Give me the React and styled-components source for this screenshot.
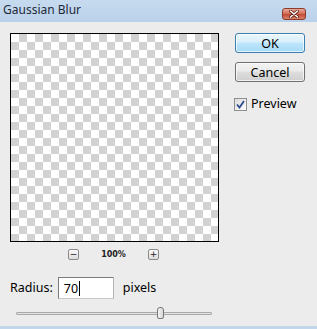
import React from "react";
import styled, { createGlobalStyle } from "styled-components";

const Global = createGlobalStyle`
  html, body { margin: 0; padding: 0; background: #ededed; }
  * { box-sizing: border-box; }
`;

const Window = styled.div`
  width: 317px;
  height: 329px;
  display: flex;
  flex-direction: column;
  background: #ececec;
  border-bottom: 3px solid #c3d7ec;
  font-family: "Noto Sans", "Open Sans", sans-serif;
  color: #000;
  overflow: hidden;
`;

const TitleBar = styled.div`
  height: 22px;
  flex: none;
  display: flex;
  align-items: flex-start;
  justify-content: space-between;
  padding: 0 11px 0 3px;
  background: linear-gradient(#c7dbef, #b9d1ea);
`;

const Title = styled.span`
  font-size: 12px;
  line-height: 20px;
  color: #1e2a38;
`;

const CloseButton = styled.div`
  margin-top: 8px;
  width: 24px;
  height: 12px;
  border: 1px solid #8c3a2c;
  border-radius: 3px;
  background: linear-gradient(#e9a99a, #d36a55 50%, #c04a35 51%, #d8826c);
  display: flex;
  align-items: center;
  justify-content: center;
`;

const Body = styled.div`
  flex: 1;
  display: flex;
  padding: 11px 0 0 10px;
`;

const LeftColumn = styled.div`
  width: 209px;
  display: flex;
  flex-direction: column;
`;

const Canvas = styled.div`
  width: 209px;
  height: 209px;
  border: 1px solid #000;
  background-color: #fff;
  background-image:
    linear-gradient(45deg, #d2d2d2 25%, transparent 25%, transparent 75%, #d2d2d2 75%),
    linear-gradient(45deg, #d2d2d2 25%, transparent 25%, transparent 75%, #d2d2d2 75%);
  background-size: 16px 16px;
  background-position: 0 0, 8px 8px;
`;

const ZoomRow = styled.div`
  margin-top: 6px;
  height: 12px;
  display: flex;
  align-items: center;
  justify-content: center;
  gap: 22px;
  padding-right: 2px;
`;

const ZoomButton = styled.div`
  width: 11px;
  height: 11px;
  border: 1px solid #8a8a8a;
  border-radius: 2px;
  background: linear-gradient(#fafafa, #dcdcdc);
  font-family: "DejaVu Sans", sans-serif;
  font-size: 9px;
  line-height: 9px;
  text-align: center;
  color: #222;
`;

const ZoomLabel = styled.span`
  font-family: "DejaVu Sans", sans-serif;
  font-weight: bold;
  font-size: 8px;
  color: #222;
  width: 25px;
  text-align: center;
`;

const RadiusRow = styled.div`
  margin-top: 17px;
  display: flex;
  align-items: center;
`;

const Label = styled.span`
  font-size: 12.5px;
  line-height: 16px;
  margin-right: ${(p) => p.$gap || 0}px;
`;

const TextInput = styled.div`
  width: 56px;
  height: 22px;
  border: 1px solid #7a7a7a;
  border-right-color: #b5b5b5;
  border-bottom-color: #c9c9c9;
  background: #fff;
  display: flex;
  align-items: center;
  padding-left: 5px;
  font-size: 12.5px;
  margin-right: 9px;
`;

const Caret = styled.span`
  display: inline-block;
  width: 1px;
  height: 15px;
  background: #000;
  margin-left: 1px;
`;

const SliderWrap = styled.div`
  position: relative;
  margin: 8px 0 0 6px;
  width: 196px;
  height: 12px;
`;

const Track = styled.div`
  position: absolute;
  left: 0;
  right: 0;
  top: 5px;
  height: 3px;
  border: 1px solid #a9a9a9;
  border-radius: 1px;
  background: #e3e3e3;
`;

const Thumb = styled.div`
  position: absolute;
  top: 0;
  width: 7px;
  height: 12px;
  border: 1px solid #777;
  border-radius: 3px 3px 2px 2px;
  background: linear-gradient(90deg, #f6f6f6, #d4d4d4);
`;

const RightColumn = styled.div`
  margin-left: 16px;
  display: flex;
  flex-direction: column;
  width: 70px;
`;

const Button = styled.div`
  width: 70px;
  height: 20px;
  border: 1px solid ${(p) => (p.$default ? "#3c7fb1" : "#707070")};
  border-radius: 3px;
  background: ${(p) =>
    p.$default
      ? "linear-gradient(#eaf6fd, #d9f0fc 45%, #bee6fd 50%, #a7d9f5)"
      : "linear-gradient(#f2f2f2, #ebebeb 45%, #dddddd 50%, #cfcfcf)"};
  box-shadow: inset 0 0 0 1px rgba(255, 255, 255, 0.7);
  display: flex;
  align-items: center;
  justify-content: center;
  font-size: 12.5px;
  margin-bottom: ${(p) => p.$mb || 0}px;
`;

const CheckRow = styled.div`
  display: flex;
  align-items: center;
  gap: 4px;
  margin-left: -1px;
`;

const CheckBox = styled.div`
  width: 13px;
  height: 13px;
  border: 1px solid #8e8f8f;
  background: linear-gradient(135deg, #dcdcdc, #fdfdfd);
  display: flex;
  align-items: center;
  justify-content: center;
`;

export default function App() {
  const radius = 70;
  const thumbLeft = 141;
  return (
    <>
      <Global />
      <Window>
        <TitleBar>
          <Title>Gaussian Blur</Title>
          <CloseButton>
            <svg width="10" height="8" viewBox="0 0 10 8">
              <path d="M1.5 1 L8.5 7 M8.5 1 L1.5 7" stroke="#5a1a10" strokeWidth="3" strokeLinecap="round" />
              <path d="M1.5 1 L8.5 7 M8.5 1 L1.5 7" stroke="#fff" strokeWidth="1.6" strokeLinecap="round" />
            </svg>
          </CloseButton>
        </TitleBar>
        <Body>
          <LeftColumn>
            <Canvas />
            <ZoomRow>
              <ZoomButton>−</ZoomButton>
              <ZoomLabel>100%</ZoomLabel>
              <ZoomButton>+</ZoomButton>
            </ZoomRow>
            <RadiusRow>
              <Label $gap={5}>Radius:</Label>
              <TextInput>
                {radius}
                <Caret />
              </TextInput>
              <Label>pixels</Label>
            </RadiusRow>
            <SliderWrap>
              <Track />
              <Thumb style={{ left: thumbLeft }} />
            </SliderWrap>
          </LeftColumn>
          <RightColumn>
            <Button $default $mb={9}>OK</Button>
            <Button $mb={14}>Cancel</Button>
            <CheckRow>
              <CheckBox>
                <svg width="9" height="9" viewBox="0 0 9 9">
                  <path d="M1 4.5 L3.5 7.5 L8 1" fill="none" stroke="#2b4a8c" strokeWidth="1.8" />
                </svg>
              </CheckBox>
              <Label>Preview</Label>
            </CheckRow>
          </RightColumn>
        </Body>
      </Window>
    </>
  );
}
